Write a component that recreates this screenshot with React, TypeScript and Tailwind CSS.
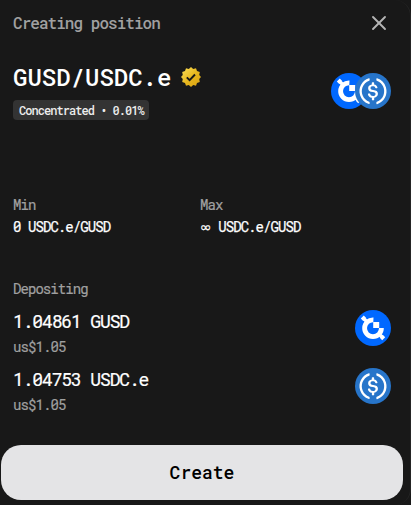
import { X } from "lucide-react";

const mono = "font-['Roboto_Mono','DejaVu_Sans_Mono','Liberation_Mono',monospace]";

const deposits = [
  { amount: "1.04861", symbol: "GUSD", value: "us$1.05" },
  { amount: "1.04753", symbol: "USDC.e", value: "us$1.05" },
];

const ranges = [
  { label: "Min", value: "0", unit: "USDC.e/GUSD" },
  { label: "Max", value: "∞", unit: "USDC.e/GUSD" },
];

function GusdIcon() {
  return (
    <svg viewBox="0 0 36 36" className="size-9 shrink-0">
      <circle cx="18" cy="18" r="18" fill="#0068ff" />
      <path d="M18.4 9.8A8.4 8.4 0 1 0 26.4 18" fill="none" stroke="#fff" strokeWidth="4.8" />
      <path
        d="M7 9.8 10 6.8M8.5 8.3l3.5 3.5M26 29l3-3M27.5 27.5 24 24"
        fill="none"
        stroke="#fff"
        strokeWidth="3.4"
      />
      <path d="M18.2 12h6v6h-6z" fill="#fff" />
    </svg>
  );
}

function UsdcIcon() {
  return (
    <svg viewBox="0 0 2000 2000" className="size-9 shrink-0">
      <circle cx="1000" cy="1000" r="1000" fill="#2775ca" />
      <path
        d="M1275 1158.33c0-145.83-87.5-195.83-262.5-216.66-125-16.67-150-50-150-108.34s41.67-95.83 125-95.83c75 0 116.67 25 137.5 87.5 4.17 12.5 16.67 20.83 29.17 20.83h66.66c16.67 0 29.17-12.5 29.17-29.16v-4.17c-16.67-91.67-91.67-162.5-187.5-170.83v-100c0-16.67-12.5-29.17-33.33-33.34h-62.5c-16.67 0-29.17 12.5-33.34 33.34v95.83c-125 16.67-204.16 100-204.16 204.17 0 137.5 83.33 191.66 258.33 212.5 116.67 20.83 154.17 45.83 154.17 112.5s-58.34 112.5-137.5 112.5c-108.34 0-145.84-45.84-158.34-108.34-4.16-16.66-16.66-25-29.16-25h-70.84c-16.66 0-29.16 12.5-29.16 29.17v4.17c16.66 104.16 83.33 179.16 220.83 200v100c0 16.66 12.5 29.16 33.33 33.33h62.5c16.67 0 29.17-12.5 33.34-33.33v-100c125-20.84 208.33-108.34 208.33-220.84z"
        fill="#fff"
      />
      <path
        d="M787.5 1595.83c-325-116.66-491.67-479.16-370.83-800 62.5-175 200-308.33 370.83-370.83 16.67-8.33 25-20.83 25-41.67V325c0-16.67-8.33-29.17-25-33.33-4.17 0-12.5 0-16.67 4.16-395.83 125-612.5 545.84-487.5 941.67 75 233.33 254.17 412.5 487.5 487.5 16.67 8.33 33.34 0 37.5-16.67 4.17-4.16 4.17-8.33 4.17-16.66v-58.34c0-12.5-12.5-29.16-25-37.5zM1229.17 295.83c-16.67-8.33-33.34 0-37.5 16.67-4.17 4.17-4.17 8.33-4.17 16.67v58.33c0 16.67 12.5 33.33 25 41.67 325 116.66 491.67 479.16 370.83 800-62.5 175-200 308.33-370.83 370.83-16.67 8.33-25 20.83-25 41.67V1700c0 16.67 8.33 29.17 25 33.33 4.17 0 12.5 0 16.67-4.16 395.83-125 612.5-545.84 487.5-941.67-75-237.5-258.34-416.67-487.5-491.67z"
        fill="#fff"
      />
    </svg>
  );
}

function VerifiedBadge() {
  return (
    <svg viewBox="0 0 22 22" className="size-[22px]">
      <defs>
        <linearGradient id="gold" x1="0" y1="0" x2="1" y2="1">
          <stop offset="0.2" stopColor="#f4d144" />
          <stop offset="0.55" stopColor="#e5b41c" />
          <stop offset="1" stopColor="#dca313" />
        </linearGradient>
      </defs>
      <path
        d="M11 1l2.2 2 2.8-.7 1 2.8 2.8.9-.6 2.9L21 11l-1.8 2.1.6 2.9-2.8.9-1 2.8-2.8-.7-2.2 2-2.2-2-2.8.7-1-2.8-2.8-.9.6-2.9L1 11l1.8-2.1L2.2 6 5 5.1l1-2.8 2.8.7z"
        fill="url(#gold)"
      />
      <path d="M6.8 11.3l2.8 2.8 5.4-5.6" fill="none" stroke="#181818" strokeWidth="1.9" />
    </svg>
  );
}

export default function App() {
  return (
    <div className="h-[505px] w-[411px] overflow-hidden bg-[#181818]">
      <div className={`flex h-full flex-col rounded-r-2xl border-r border-[#242424] text-white ${mono}`}>
        <header className="mt-[11px] flex h-[23px] items-center justify-between pr-[19px] pl-[13px]">
          <h2 className="text-base font-medium tracking-[-0.96px] text-[#a0a0a0]">Creating position</h2>
          <X className="size-6 text-[#b4b4b4]" strokeWidth={1.9} />
        </header>

        <section className="mt-[30px] flex h-14 justify-between pr-[19px] pl-[13px]">
          <div className="flex flex-col items-start">
            <div className="flex h-[25px] items-center gap-[9px]">
              <h1 className="text-2xl font-medium">GUSD/USDC.e</h1>
              <VerifiedBadge />
            </div>
            <span className="mt-[11px] flex h-5 w-[136px] items-center rounded bg-[#333333] pl-1.5 text-xs font-medium tracking-[-0.96px] whitespace-nowrap text-[#ececec]">
              Concentrated • 0.01%
            </span>
          </div>
          <div className="mt-[9px] flex">
            <GusdIcon />
            <div className="-ml-3">
              <UsdcIcon />
            </div>
          </div>
        </section>

        <section className="mt-[74px] grid grid-cols-[187px_1fr] pl-[13px]">
          {ranges.map((range) => (
            <div key={range.label} className="text-sm leading-[22px] tracking-[-0.93px]">
              <p className="h-[22px] text-[#a0a0a0] [-webkit-text-stroke:0.2px]">{range.label}</p>
              <p className="h-[22px] [-webkit-text-stroke:0.25px]">
                <span className={range.value === "∞" ? "font-['DejaVu_Sans',sans-serif]" : ""}>
                  {range.value}
                </span>{" "}
                {range.unit}
              </p>
            </div>
          ))}
        </section>

        <section className="mt-[39px] pr-[19px] pl-[13px]">
          <p className="h-[23px] text-sm leading-[23px] tracking-[-0.94px] text-[#a0a0a0] [-webkit-text-stroke:0.2px]">
            Depositing
          </p>
          <div className="mt-[7px] flex flex-col">
            {deposits.map((deposit) => (
              <div key={deposit.symbol} className="flex h-[58px] items-start justify-between">
                <div>
                  <p className="h-[29px] text-lg leading-7 tracking-[-1.14px] [-webkit-text-stroke:0.2px]">
                    {deposit.amount} {deposit.symbol}
                  </p>
                  <p className="h-[22px] text-sm leading-[22px] tracking-[-0.92px] text-[#a0a0a0] [-webkit-text-stroke:0.2px]">
                    {deposit.value}
                  </p>
                </div>
                <div className="mt-[3px]">{deposit.symbol === "GUSD" ? <GusdIcon /> : <UsdcIcon />}</div>
              </div>
            ))}
          </div>
        </section>

        <button className="mt-auto mb-[5px] ml-px h-[55px] w-[402px] rounded-[20px] bg-[#e4e4e6] pb-0.5 text-lg font-medium text-black">
          Create
        </button>
      </div>
    </div>
  );
}
